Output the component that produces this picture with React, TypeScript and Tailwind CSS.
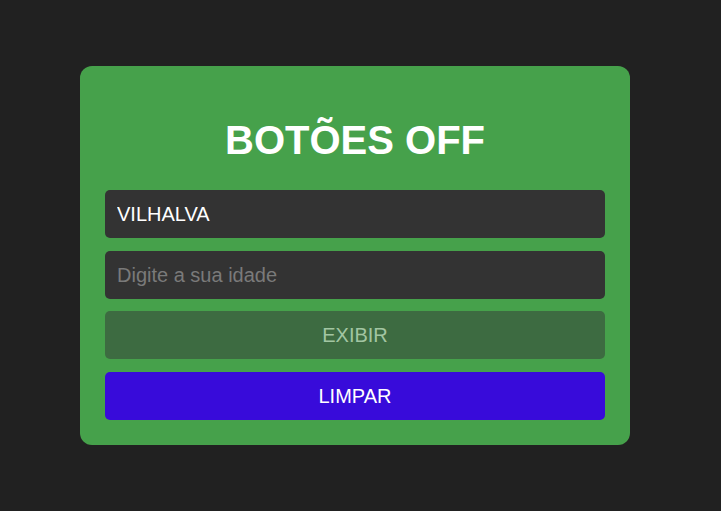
import { useState } from "react";

export default function App() {
  const [nome, setNome] = useState("VILHALVA");
  const [idade, setIdade] = useState("");

  return (
    <div
      className="w-screen h-screen bg-[#212121] flex items-center justify-center pr-[11px]"
      style={{ fontFamily: '"Liberation Sans", Arial, sans-serif' }}
    >
      <div className="w-[550px] bg-[#46a14b] rounded-[12px] pt-[51px] pb-[25px] px-[25px] flex flex-col">
        <h1 className="text-white text-[40px] leading-[46px] font-bold text-center mb-[27px]">
          BOTÕES OFF
        </h1>

        <input
          className="h-[48px] w-full rounded-[5px] bg-[#333333] text-white text-[20px] px-[12px] outline-none placeholder:text-[#7a7a7a]"
          value={nome}
          onChange={(e) => setNome(e.target.value)}
          placeholder="Digite o seu nome"
        />
        <input
          className="mt-[13px] h-[48px] w-full rounded-[5px] bg-[#333333] text-white text-[20px] px-[12px] outline-none placeholder:text-[#7a7a7a]"
          value={idade}
          onChange={(e) => setIdade(e.target.value)}
          placeholder="Digite a sua idade"
        />

        {/* botões */}
        <button
          disabled
          className="mt-[12px] h-[48px] w-full rounded-[5px] bg-[#3d6b41] text-[#a2c5a2] text-[20px]"
        >
          EXIBIR
        </button>
        <button
          className="mt-[13px] h-[48px] w-full rounded-[5px] bg-[#380bda] text-white text-[20px]"
          onClick={() => {
            setNome("");
            setIdade("");
          }}
        >
          LIMPAR
        </button>
      </div>
    </div>
  );
}
